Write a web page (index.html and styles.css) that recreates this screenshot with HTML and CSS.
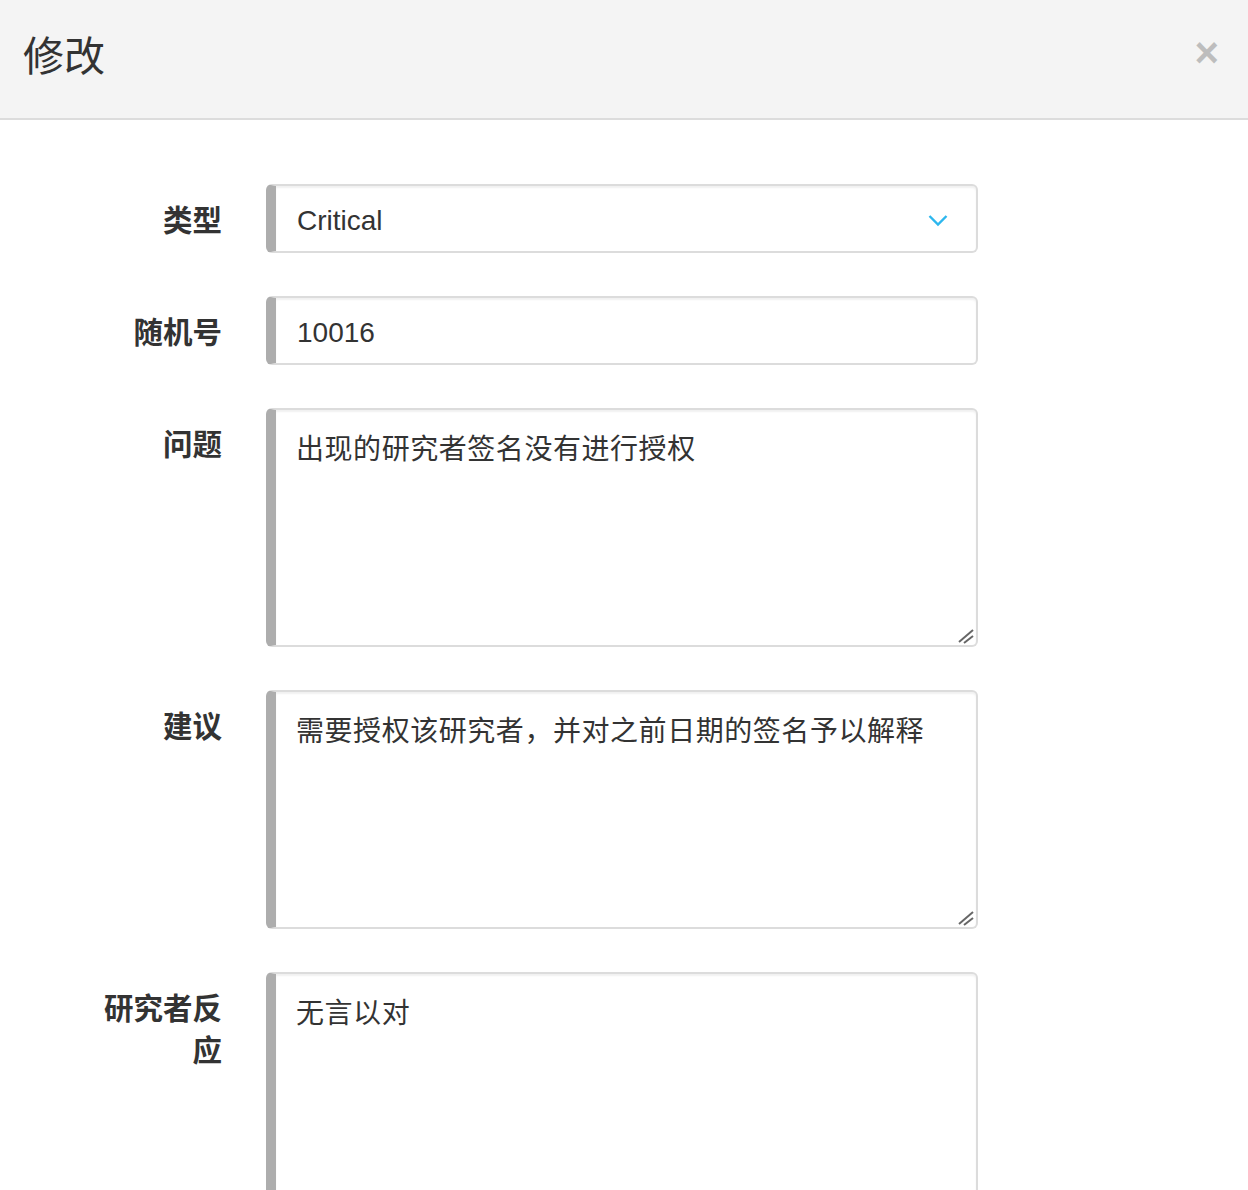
FILE: index.html
```html
<!DOCTYPE html>
<html lang="zh-CN">
<head>
<meta charset="utf-8">
<title>修改</title>
<link rel="stylesheet" href="styles.css">
</head>
<body>
<div class="modal">
  <header class="modal-header">
    <h1 class="modal-title">修改</h1>
    <button class="close" type="button">×</button>
  </header>
  <form class="modal-body">
    <div class="row">
      <label class="label">类型</label>
      <div class="field select">
        <span>Critical</span>
        <svg class="chevron" width="20" height="14" viewBox="0 0 20 14"><polyline points="1.5,2 10,10.5 18.5,2" fill="none" stroke="#2db7ee" stroke-width="2.4"/></svg>
      </div>
    </div>
    <div class="row">
      <label class="label">随机号</label>
      <input class="field input" type="text" value="10016">
    </div>
    <div class="row">
      <label class="label">问题</label>
      <div class="ta-wrap">
        <textarea class="field textarea">出现的研究者签名没有进行授权</textarea>
        <svg class="grip" width="16" height="16" viewBox="0 0 16 16"><line x1="1" y1="14" x2="15" y2="2" stroke="#666" stroke-width="2"/><line x1="6" y1="15" x2="15" y2="8" stroke="#666" stroke-width="2"/></svg>
      </div>
    </div>
    <div class="row">
      <label class="label">建议</label>
      <div class="ta-wrap">
        <textarea class="field textarea">需要授权该研究者，并对之前日期的签名予以解释</textarea>
        <svg class="grip" width="16" height="16" viewBox="0 0 16 16"><line x1="1" y1="14" x2="15" y2="2" stroke="#666" stroke-width="2"/><line x1="6" y1="15" x2="15" y2="8" stroke="#666" stroke-width="2"/></svg>
      </div>
    </div>
    <div class="row">
      <label class="label">研究者反应</label>
      <div class="ta-wrap">
        <textarea class="field textarea">无言以对</textarea>
        <svg class="grip" width="16" height="16" viewBox="0 0 16 16"><line x1="1" y1="14" x2="15" y2="2" stroke="#666" stroke-width="2"/><line x1="6" y1="15" x2="15" y2="8" stroke="#666" stroke-width="2"/></svg>
      </div>
    </div>
  </form>
</div>
</body>
</html>
```
FILE: styles.css
```css
html, body {
  margin: 0;
  padding: 0;
  height: 100%;
  overflow: hidden;
  background: #fff;
}
body {
  font-family: "Liberation Sans", "Noto Sans CJK SC", sans-serif;
  color: #333;
}
.modal {
  height: 1190px;
  overflow: hidden;
  background: #fff;
}
.modal-header {
  height: 118px;
  background: #f4f4f4;
  border-bottom: 2px solid #dcdcdc;
  display: flex;
  align-items: center;
  justify-content: space-between;
  padding: 0 29px 0 23px;
}
.modal-title {
  margin: 0 0 12px 0;
  font-family: "Noto Sans CJK SC", sans-serif;
  font-weight: 400;
  font-size: 41px;
  line-height: 1;
  color: #333;
}
.close {
  border: 0;
  background: transparent;
  padding: 0;
  margin: 0 0 12px 0;
  font-family: "Liberation Sans", sans-serif;
  font-weight: 700;
  font-size: 42px;
  line-height: 1;
  color: #000;
  opacity: 0.22;
  cursor: pointer;
}
.modal-body {
  padding: 64px 0 0 97px;
  display: flex;
  flex-direction: column;
  gap: 43px;
}
.row {
  display: grid;
  grid-template-columns: 125px 712px;
  column-gap: 44px;
  align-items: start;
}
.label {
  text-align: right;
  font-family: "Noto Sans CJK SC", sans-serif;
  font-weight: 700;
  font-size: 29.5px;
  line-height: 42px;
  padding-top: 13px;
  color: #333;
}
.field {
  box-sizing: border-box;
  width: 712px;
  margin: 0;
  border: 2px solid #dcdcdc;
  border-left: 10px solid #adadad;
  border-radius: 6px;
  background: #fff;
  box-shadow: inset 0 2px 2px rgba(0, 0, 0, 0.06);
  font-family: "Liberation Sans", "Noto Sans CJK SC", sans-serif;
  font-size: 28px;
  color: #333;
  outline: none;
}
.select {
  height: 69px;
  display: flex;
  align-items: center;
  justify-content: space-between;
  padding: 4px 28px 0 21px;
}
.chevron {
  display: block;
}
.input {
  height: 69px;
  padding: 4px 21px 0;
  line-height: normal;
}
.ta-wrap {
  position: relative;
  width: 712px;
  height: 239px;
}
.textarea {
  display: block;
  height: 239px;
  padding: 19px 20px 17px;
  line-height: 42px;
  letter-spacing: 0.55px;
  resize: none;
  overflow: hidden;
}
.grip {
  position: absolute;
  right: 4px;
  bottom: 3px;
}
```
